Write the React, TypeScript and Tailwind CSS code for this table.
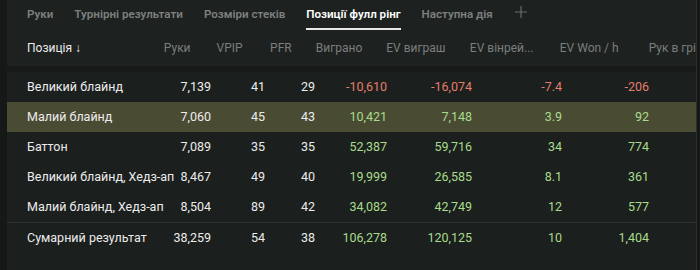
import React from 'react';

type Row = {
  name: string;
  hands: string;
  vpip: string;
  pfr: string;
  won: string;
  ev: string;
  evbb: string;
  evh: string;
};

const rows: Row[] = [
  { name: 'Великий блайнд', hands: '7,139', vpip: '41', pfr: '29', won: '-10,610', ev: '-16,074', evbb: '-7.4', evh: '-206' },
  { name: 'Малий блайнд', hands: '7,060', vpip: '45', pfr: '43', won: '10,421', ev: '7,148', evbb: '3.9', evh: '92' },
  { name: 'Баттон', hands: '7,089', vpip: '35', pfr: '35', won: '52,387', ev: '59,716', evbb: '34', evh: '774' },
  { name: 'Великий блайнд, Хедз-ап', hands: '8,467', vpip: '49', pfr: '40', won: '19,999', ev: '26,585', evbb: '8.1', evh: '361' },
  { name: 'Малий блайнд, Хедз-ап', hands: '8,504', vpip: '89', pfr: '42', won: '34,082', ev: '42,749', evbb: '12', evh: '577' },
];

const total: Row = { name: 'Сумарний результат', hands: '38,259', vpip: '54', pfr: '38', won: '106,278', ev: '120,125', evbb: '10', evh: '1,404' };

const tabs = ['Руки', 'Турнірні результати', 'Розміри стеків', 'Позиції фулл рінг', 'Наступна дія'];

const money = (v: string) => (v.startsWith('-') ? 'text-[#e47d6c]' : 'text-[#a9db8c]');

function DataRow({ r, active }: { r: Row; active?: boolean }) {
  return (
    <div className={`flex items-center h-[30px] text-[12.5px] text-[#ececec] ${active ? 'bg-[#4a4b33]' : ''}`}>
      <div className="w-[144px] pl-[20px] whitespace-nowrap">{r.name}</div>
      <div className="w-[60px] text-right">{r.hands}</div>
      <div className="w-[54px] text-right">{r.vpip}</div>
      <div className="w-[50px] text-right">{r.pfr}</div>
      <div className={`w-[72px] text-right ${money(r.won)}`}>{r.won}</div>
      <div className={`w-[85px] text-right ${money(r.ev)}`}>{r.ev}</div>
      <div className={`w-[90px] text-right ${money(r.evbb)}`}>{r.evbb}</div>
      <div className={`w-[87px] text-right ${money(r.evh)}`}>{r.evh}</div>
    </div>
  );
}

export default function App() {
  return (
    <div className="w-[700px] h-[270px] flex bg-[#161918] overflow-hidden" style={{ fontFamily: 'Roboto, "Liberation Sans", sans-serif' }}>
      <div className="w-[7px] shrink-0 bg-[#161817]" />
      <div className="w-[689px] shrink-0 flex flex-col bg-[#1b1f1d] overflow-hidden">
        <div className="bg-[#1d2120] h-[66px] flex flex-col">
          <div className="flex items-start h-[33px] pl-[20px] gap-[21px] text-[11.6px] font-semibold text-[#7c807e]">
            {tabs.map((t, i) => (
              <div key={t} className={`pt-[6px] whitespace-nowrap ${i === 3 ? 'text-white' : ''}`}>
                <div>{t}</div>
                {i === 3 && <div className="mt-[5px] h-[2px] bg-[#e8e8e8]" />}
              </div>
            ))}
            <svg width="14" height="14" viewBox="0 0 14 14" className="mt-[5px]">
              <path d="M7 1v12M1 7h12" stroke="#686c6a" strokeWidth="1.2" />
            </svg>
          </div>
          <div className="flex items-center h-[30px] text-[12px] text-[#7a7e7c] whitespace-nowrap">
            <div className="w-[144px] pl-[20px] text-[#ececec]">Позиція ↓</div>
            <div className="w-[60px] text-right pr-[16px]">Руки</div>
            <div className="w-[54px] text-right pr-[17px]">VPIP</div>
            <div className="w-[50px] text-right pr-[17px]">PFR</div>
            <div className="w-[72px] text-right pr-[17px]">Виграно</div>
            <div className="w-[85px] text-right pr-[17px]">EV виграш</div>
            <div className="w-[90px] text-right pr-[17px]">EV вінрей...</div>
            <div className="w-[87px] text-right pr-[17px]">EV Won / h</div>
            <div className="pl-[13px]">Рук в грі</div>
          </div>
        </div>
        <div className="h-[6px] bg-[#171a19]" />
        {rows.map((r, i) => (
          <DataRow key={r.name} r={r} active={i === 1} />
        ))}
        <div className="h-[1px] bg-[#2e3230]" />
        <DataRow r={total} />
      </div>
      <div className="w-[1px] shrink-0 bg-[#2c2f2e]" />
      <div className="flex-1 bg-[#161817]" />
    </div>
  );
}
